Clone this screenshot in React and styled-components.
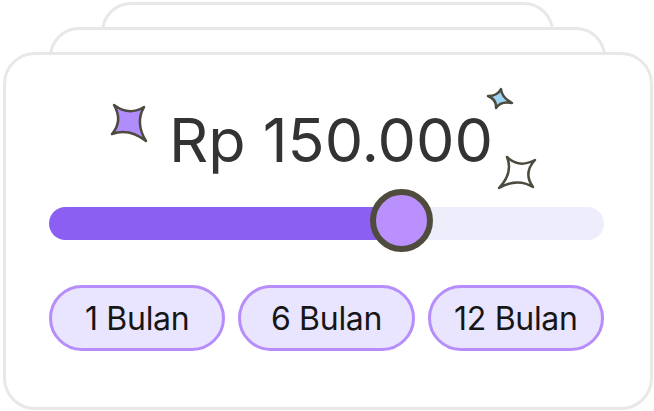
import React from "react";
import styled, { createGlobalStyle } from "styled-components";

const GlobalStyle = createGlobalStyle`
  html, body {
    margin: 0;
    padding: 0;
    background: #ffffff;
    font-family: Inter, "Noto Sans", sans-serif;
  }
`;

const Stack = styled.div`
  width: 654px;
  height: 411px;
  display: flex;
  flex-direction: column;
  align-items: center;
  padding-top: 2px;
  box-sizing: border-box;
  overflow: hidden;
`;

const BackCard = styled.div`
  width: ${(p) => p.$width}px;
  height: 60px;
  flex-shrink: 0;
  box-sizing: border-box;
  border: 3px solid #e8e8e8;
  border-radius: 30px;
  background: #ffffff;
  margin-bottom: -35px;
  position: relative;
  z-index: ${(p) => p.$layer};
`;

const Card = styled.div`
  position: relative;
  z-index: 3;
  width: 650px;
  height: 358px;
  flex-shrink: 0;
  margin-left: 2px;
  box-sizing: border-box;
  border: 3px solid #e8e8e8;
  border-radius: 32px;
  background: #ffffff;
  padding: 50px 46px 0 43px;
  display: flex;
  flex-direction: column;
`;

const Price = styled.div`
  font-size: 61px;
  line-height: 70px;
  color: #333333;
  text-align: center;
  padding-left: 9px;
  margin-bottom: 1px;
`;

const Slider = styled.div`
  position: relative;
  height: 63px;
  margin-top: 13px;
`;

const Track = styled.div`
  position: absolute;
  left: 0;
  right: 0;
  top: 18px;
  height: 33px;
  border-radius: 17px;
  background: #ededfc;
  overflow: hidden;
`;

const Fill = styled.div`
  height: 100%;
  background: #8b5ff2;
`;

const Knob = styled.div`
  position: absolute;
  top: 0;
  width: 63px;
  height: 63px;
  margin-left: -31px;
  box-sizing: border-box;
  border-radius: 50%;
  border: 6px solid #4f4c3e;
  background: #b990fd;
`;

const Options = styled.div`
  display: grid;
  grid-template-columns: repeat(3, 1fr);
  gap: 13px;
  margin-top: 33px;
`;

const Option = styled.button`
  height: 66px;
  box-sizing: border-box;
  border: 3px solid #b68dfa;
  border-radius: 33px;
  background: #e9e5fe;
  font-family: Inter, "Noto Sans", sans-serif;
  font-size: 32px;
  letter-spacing: -0.3px;
  color: #161616;
  padding: 0;
  cursor: pointer;
`;

const SparkleBox = styled.svg`
  position: absolute;
  left: ${(p) => p.$x}px;
  top: ${(p) => p.$y}px;
  overflow: visible;
`;

function sparklePath(tips, c, f = 0.25) {
  let d = `M ${tips[0][0]} ${tips[0][1]}`;
  for (let i = 0; i < 4; i++) {
    const a = tips[i];
    const b = tips[(i + 1) % 4];
    const mx = (a[0] + b[0]) / 2;
    const my = (a[1] + b[1]) / 2;
    const qx = c[0] + (mx - c[0]) * f;
    const qy = c[1] + (my - c[1]) * f;
    d += ` Q ${qx.toFixed(1)} ${qy.toFixed(1)} ${b[0]} ${b[1]}`;
  }
  return d + " Z";
}

function Sparkle({ x, y, w, h, tips, center, fill, f }) {
  return (
    <SparkleBox $x={x} $y={y} width={w} height={h} viewBox={`0 0 ${w} ${h}`}>
      <path
        d={sparklePath(tips, center, f)}
        fill={fill}
        stroke="#4d4b3f"
        strokeWidth="2.5"
        strokeLinejoin="round"
      />
    </SparkleBox>
  );
}

const periods = ["1 Bulan", "6 Bulan", "12 Bulan"];

export default function App() {
  const value = 63.4;
  return (
    <>
      <GlobalStyle />
      <Stack>
        <BackCard $width={453} $layer={1} />
        <BackCard $width={557} $layer={2} />
        <Card>
          <Sparkle
            x={100}
            y={43}
            w={48}
            h={50}
            tips={[[8, 7], [38, 9], [40, 43], [6, 36]]}
            center={[23, 24]}
            fill="#b18cfc"
            f={0.36}
          />
          <Sparkle
            x={477}
            y={29}
            w={34}
            h={30}
            tips={[[18, 5], [29, 19], [13, 24], [5, 12]]}
            center={[16, 14]}
            fill="#9fd4f5"
            f={0.34}
          />
          <Sparkle
            x={487}
            y={96}
            w={48}
            h={43}
            tips={[[14, 6], [42, 9], [40, 36], [6, 37]]}
            center={[25, 22]}
            fill="#ffffff"
            f={0.3}
          />
          <Price>Rp 150.000</Price>
          <Slider>
            <Track>
              <Fill style={{ width: `${value}%` }} />
            </Track>
            <Knob style={{ left: `${value}%` }} />
          </Slider>
          <Options>
            {periods.map((p) => (
              <Option key={p}>{p}</Option>
            ))}
          </Options>
        </Card>
      </Stack>
    </>
  );
}
